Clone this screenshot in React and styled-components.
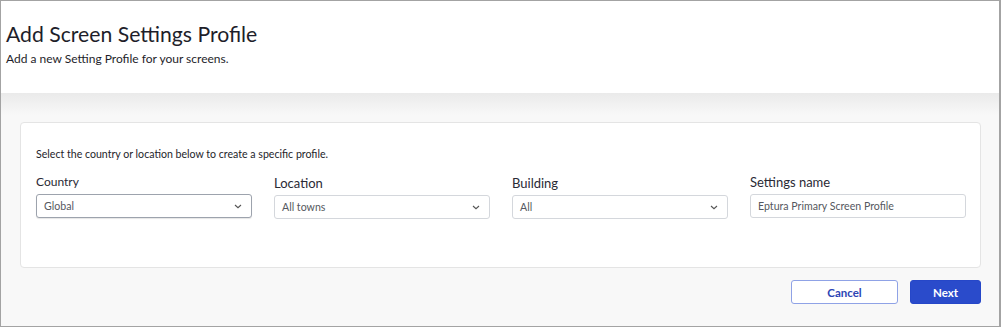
import React from "react";
import styled, { createGlobalStyle } from "styled-components";

const Global = createGlobalStyle`
  html, body { margin: 0; padding: 0; background: #fff; }
  * { box-sizing: border-box; }
`;

const Frame = styled.div`
  width: 1001px;
  height: 327px;
  border: 1px solid #a3a3a3;
  border-right-width: 2px;
  background: #f8f8f8;
  font-family: Lato, "Noto Sans", sans-serif;
  color: #1e1e2a;
  display: flex;
  flex-direction: column;
  overflow: hidden;
`;

const Header = styled.header`
  background: #fff;
  height: 92px;
  padding: 19px 5px 0;
  position: relative;
  &::after {
    content: "";
    position: absolute;
    left: 0;
    right: 0;
    top: 92px;
    height: 22px;
    background: linear-gradient(#eaeaea, #f8f8f8);
  }
`;

const Title = styled.h1`
  margin: 0;
  font-size: 21.2px;
  font-weight: 400;
  line-height: 28px;
`;

const Subtitle = styled.p`
  margin: 3px 0 0;
  font-size: 12px;
  line-height: 16px;
`;

const Body = styled.main`
  flex: 1;
  padding: 29px 18px 0 19px;
  display: flex;
  flex-direction: column;
`;

const Card = styled.section`
  background: #fff;
  border: 1px solid #e4e4e4;
  border-radius: 4px;
  height: 146px;
  padding: 24px 14px 0 15px;
`;

const Intro = styled.p`
  margin: 0 0 13px;
  font-size: 10.6px;
  line-height: 14px;
`;

const Fields = styled.div`
  display: grid;
  grid-template-columns: repeat(4, 216px);
  column-gap: 22px;
`;

const Field = styled.div`
  display: flex;
  flex-direction: column;
  padding-top: ${(p) => p.$offset || 0}px;
`;

const Label = styled.label`
  font-size: ${(p) => p.$size || 12.5}px;
  line-height: 16px;
  margin-bottom: 4px;
  color: #2a2a35;
`;

const Control = styled.div`
  height: 24px;
  border: 1px solid ${(p) => (p.$strong ? "#9da3ad" : "#d4d7dc")};
  border-radius: 3px;
  display: flex;
  align-items: center;
  justify-content: space-between;
  padding: 0 9px 0 7px;
  font-size: 10.6px;
  color: #555860;
  background: #fff;
  box-shadow: ${(p) => (p.$strong ? "0 1px 1px rgba(0,0,0,0.1)" : "none")};
`;

const Chevron = () => (
  <svg width="8" height="5" viewBox="0 0 8 5" fill="none">
    <path d="M1 1l3 2.7L7 1" stroke="#555" strokeWidth="1.1" />
  </svg>
);

const Actions = styled.div`
  display: flex;
  justify-content: flex-end;
  gap: 12px;
  padding-top: 12px;
`;

const Button = styled.button`
  height: 24px;
  width: ${(p) => p.$w}px;
  border-radius: 3px;
  font-family: Lato, "Noto Sans", sans-serif;
  font-size: 11.5px;
  font-weight: 700;
  cursor: pointer;
  border: 1px solid ${(p) => (p.$primary ? "#2647c8" : "#8fa2e6")};
  background: ${(p) => (p.$primary ? "#2a4bcb" : "#fff")};
  color: ${(p) => (p.$primary ? "#fff" : "#2c44b4")};
`;

const fields = [
  { label: "Country", value: "Global", select: true, strong: true, size: 12, offset: 0 },
  { label: "Location", value: "All towns", select: true, size: 13, offset: 1 },
  { label: "Building", value: "All", select: true, size: 13, offset: 1 },
  { label: "Settings name", value: "Eptura Primary Screen Profile", size: 13, offset: 0 },
];

export default function App() {
  return (
    <>
      <Global />
      <Frame>
        <Header>
          <Title>Add Screen Settings Profile</Title>
          <Subtitle>Add a new Setting Profile for your screens.</Subtitle>
        </Header>
        <Body>
          <Card>
            <Intro>Select the country or location below to create a specific profile.</Intro>
            <Fields>
              {fields.map((f) => (
                <Field key={f.label} $offset={f.offset}>
                  <Label $size={f.size}>{f.label}</Label>
                  <Control $strong={f.strong}>
                    <span>{f.value}</span>
                    {f.select && <Chevron />}
                  </Control>
                </Field>
              ))}
            </Fields>
          </Card>
          <Actions>
            <Button $w={107}>Cancel</Button>
            <Button $w={71} $primary>Next</Button>
          </Actions>
        </Body>
      </Frame>
    </>
  );
}
